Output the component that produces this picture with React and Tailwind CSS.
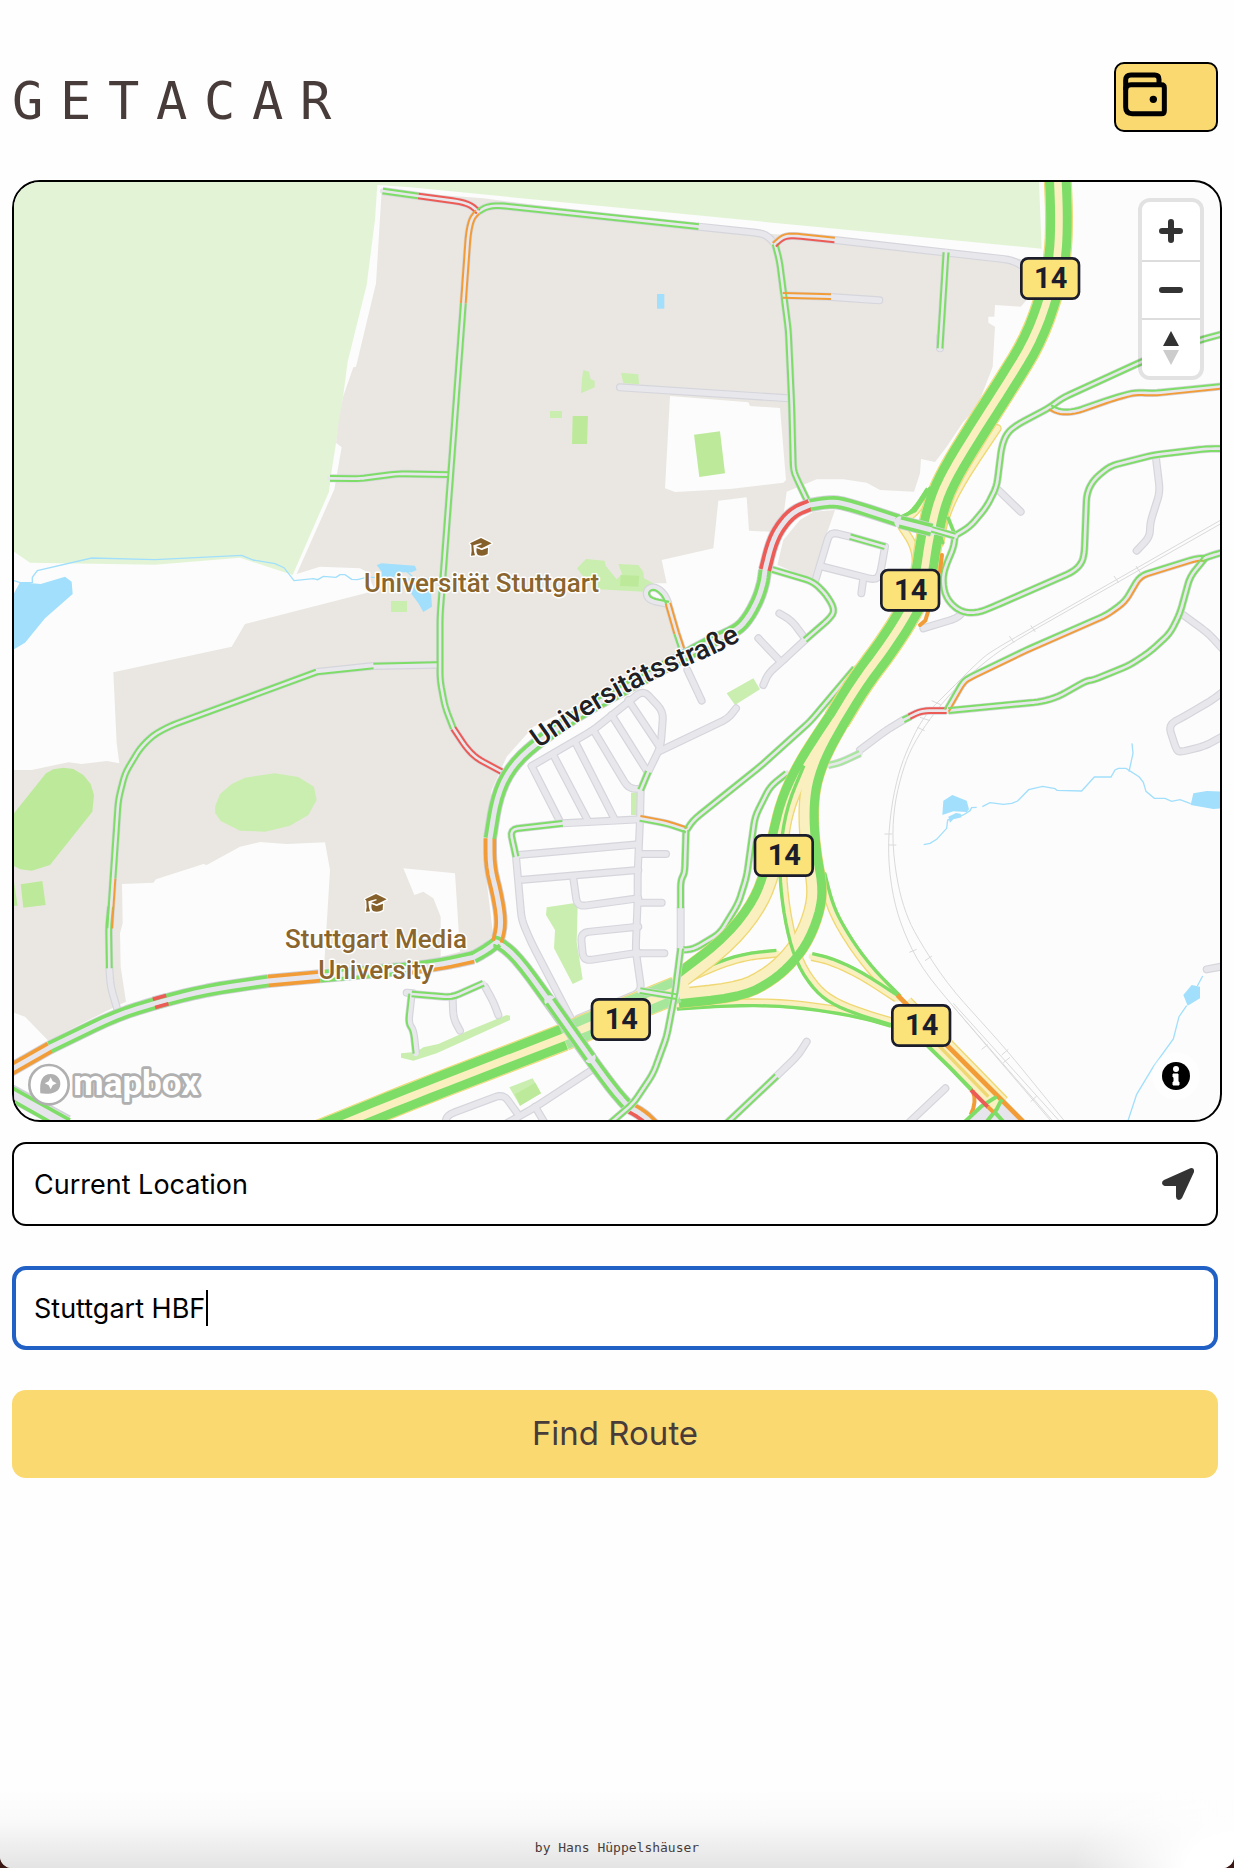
import React from "react";

/* Map geometry is written in thirds of a pixel, on six sheets with these origins. */
const A = [0, 0];
const B = [1230, 0];
const C = [2460, 0];
const D = [0, 1410];
const E = [1230, 1410];
const F = [2460, 1410];

const G = "#7ddd67";
const O = "#f29c38";
const R = "#ec5b55";
const L = "#a6e79b";

const parse = ([ox, oy], s) =>
  s.split(" ").map((p) => {
    const [x, y] = p.split(",").map(Number);
    return [x + ox, y + oy];
  });

const toPath = (pts) => "M" + pts.map((p) => p.join(",")).join("L");

/* Parallel line at distance d; positive is the right-hand side of travel. */
function offset(pts, d) {
  if (!d) return pts;
  return pts.map((p, i) => {
    const a = pts[Math.max(i - 1, 0)];
    const b = pts[Math.min(i + 1, pts.length - 1)];
    const n1 = unit(a, p);
    const n2 = unit(p, b);
    const nx = (i ? n1[0] : n2[0]) + (i < pts.length - 1 ? n2[0] : n1[0]);
    const ny = (i ? n1[1] : n2[1]) + (i < pts.length - 1 ? n2[1] : n1[1]);
    const len = Math.hypot(nx, ny) || 1;
    return [p[0] - (ny / len) * d, p[1] + (nx / len) * d];
  });
}

function unit(a, b) {
  const x = b[0] - a[0];
  const y = b[1] - a[1];
  const l = Math.hypot(x, y) || 1;
  return [x / l, y / l];
}

/* Bends are rounded by a quadratic curve that starts at most `reach` before each vertex. */
function rounded(pts, reach) {
  const out = [pts[0]];
  for (let i = 1; i < pts.length - 1; i++) {
    const [a, p, b] = [pts[i - 1], pts[i], pts[i + 1]];
    const u = unit(p, a);
    const v = unit(p, b);
    const ra = Math.min(reach, Math.hypot(a[0] - p[0], a[1] - p[1]) / 2);
    const rb = Math.min(reach, Math.hypot(b[0] - p[0], b[1] - p[1]) / 2);
    const s = [p[0] + u[0] * ra, p[1] + u[1] * ra];
    const e = [p[0] + v[0] * rb, p[1] + v[1] * rb];
    for (const t of [0.02, 0.25, 0.5, 0.75, 0.98]) {
      const q = 1 - t;
      out.push([0, 1].map((k) => q * q * s[k] + 2 * q * t * p[k] + t * t * e[k]));
    }
  }
  out.push(pts[pts.length - 1]);
  return out;
}

const KINDS = {
  minor: { casing: "#d5d5dc", fill: "#e7e7ec", outer: 24, inner: 17, off: 7, line: 6, reach: 24 },
  major: { casing: "#d0d0d8", fill: "#e5e5eb", outer: 42, inner: 34, off: 13, line: 11, reach: 80 },
  ramp: { casing: "#efd873", fill: "#f9efbf", outer: 26, inner: 18, off: 9, line: 10, reach: 120 },
  carriage: { casing: "#efd873", fill: "#f9efbf", outer: 62, inner: 54, off: 16, line: 27, reach: 120 },
  trunk: { casing: "#efd873", fill: "#f9efbf", outer: 84, inner: 78, off: 25, line: 27, reach: 120 },
};

/* [kind, sheet, points, left traffic, right traffic] */
const STREETS = [
  ["minor", B, "866,170 1055,190 1075,200 1095,222"],
  ["minor", C, "44,210 575,270 612,290"],
  ["minor", C, "33,381 178,391"],
  ["minor", C, "360,500 360,535"],
  ["minor", B, "630,652 1138,685"],
  ["minor", D, "352,1108 332,1040 328,985"],
  ["minor", E, "832,90 875,182"],
  ["minor", E, "365,378 550,270 700,150 760,215 752,320 715,395"],
  ["minor", E, "365,378 450,545"],
  ["minor", E, "430,345 535,545"],
  ["minor", E, "495,305 615,540"],
  ["minor", E, "550,270 655,445 690,447"],
  ["minor", E, "605,225 712,395"],
  ["minor", E, "655,180 745,315"],
  ["minor", E, "752,332 955,235 978,205"],
  ["minor", E, "692,450 690,540 683,700 683,780 677,930 695,1055 505,1135"],
  ["minor", E, "458,550 690,538"],
  ["minor", E, "318,650 335,840 365,910 485,1140"],
  ["minor", E, "325,645 685,613"],
  ["minor", E, "330,720 685,690"],
  ["minor", E, "490,715 502,800 685,775"],
  ["minor", E, "690,642 768,642"],
  ["minor", E, "690,788 755,788"],
  ["minor", E, "685,860 512,878 520,963 685,938"],
  ["minor", E, "685,940 763,940"],
  ["minor", E, "812,805 812,925"],
  ["minor", E, "290,1450 370,1405 545,1290"],
  ["minor", E, "105,1450 112,1425 280,1362 322,1420"],
  ["minor", E, "375,1400 405,1450"],
  ["minor", E, "1190,1205 1165,1245 1100,1308"],
  ["minor", E, "-10,1058 10,1060"],
  ["minor", E, "128,1075 130,1135 150,1172"],
  ["minor", E, "225,1040 250,1085 265,1125"],
  ["minor", B, "1185,1410 1115,1475 1075,1510 1060,1545"],
  ["minor", B, "1108,1330 1145,1352 1185,1405"],
  ["minor", B, "1045,1405 1112,1475"],
  ["minor", C, "-15,1235 30,1085 90,1100"],
  ["minor", C, "195,1130 180,1215 165,1230 0,1188"],
  ["minor", C, "130,1225 124,1270"],
  ["minor", C, "535,960 602,1025"],
  ["minor", C, "1008,865 1020,965 990,1060 990,1100 950,1142"],
  ["minor", C, "310,1375 410,1345 430,1325"],
  ["minor", C, "1090,1335 1165,1390 1215,1445"],
  ["minor", F, "1215,150 1180,178 1100,225 1045,255 1070,332 1082,336 1155,318 1215,285"],
  ["minor", F, "1160,988 1215,978"],
  ["minor", F, "376,1345 270,1445"],
  ["minor", F, "120,330 200,270 250,240"],
];

const TRAFFIC = [
  ["minor", B, "-82,63 25,78", G, G],
  ["minor", B, "25,78 150,95 182,105 205,125", R, R],
  ["minor", B, "205,125 230,110 265,106 866,170", G, G],
  ["minor", B, "203,126 185,145 175,190 160,400", O, O],
  ["minor", B, "160,400 122,915 90,1340 90,1530 105,1610 130,1675", G, G],
  ["minor", E, "130,265 170,325 200,355 290,403", R, R],
  ["minor", A, "990,925 1080,926 1195,911 1345,914", G, G],
  ["minor", B, "1095,222 1108,270 1135,480 1145,700 1150,900 1160,925 1198,1005", G, G],
  ["minor", B, "1093,224 1120,200 1150,197 1274,210", O, R],
  ["minor", B, "1118,376 1263,380", O, O],
  ["minor", C, "378,247 360,535", G, G],
  ["minor", B, "776,1302 722,1292 708,1274 714,1256 735,1250 762,1270 776,1302", null, G],
  ["minor", B, "774,1300 800,1390", O, O],
  ["minor", B, "800,1390 820,1450", O, G],
  ["minor", D, "328,985 326,860 332,800", G, G],
  ["minor", D, "329,865 339,715", G, O],
  ["minor", D, "339,715 355,480 375,400 420,325 460,285 510,258 950,96", G, G],
  ["minor", D, "950,96 1120,78", null, G],
  ["minor", D, "1120,78 1312,74", G, null],
  ["minor", E, "318,650 300,568 458,550", G, G],
  ["minor", E, "715,395 692,450", G, G],
  ["minor", E, "690,535 770,550 830,570", O, G],
  ["minor", E, "830,570 850,540 1050,380 1200,245 1335,85", G, G],
  ["minor", E, "828,570 824,700 812,720 812,805", G, G],
  ["minor", E, "812,930 850,928 930,880 985,790 1010,710 1035,530 1080,440 1130,400", G, G],
  ["minor", E, "1255,376 1290,368 1350,340", L, L],
  ["minor", F, "250,240 270,230", G, G],
  ["minor", F, "268,230 305,212 380,212", R, R],
  ["minor", E, "5,1062 125,1072 220,1030", G, G],
  ["minor", E, "5,1062 -5,1150 10,1170 18,1240", null, G],
  ["minor", E, "1100,1308 950,1450", G, G],
  ["minor", B, "1075,1195 1210,1235 1250,1275 1275,1320 1260,1345 1185,1410", G, G],
  ["minor", C, "90,1100 195,1130", G, G],
  ["minor", C, "400,1100 450,1070 500,1010 530,950 545,830 560,790 590,765 690,712 725,685 965,575 1140,510 1215,490", G, G],
  ["minor", C, "690,712 720,727 765,725 880,685 945,667 1000,670 1215,648", G, O],
  ["minor", C, "405,1100 400,1135 380,1180 368,1220 373,1270 395,1305 430,1328 475,1328 520,1310 760,1205 785,1180 793,1150 800,970 820,930 870,888 1000,855 1160,836 1215,836", G, G],
  ["minor", F, "380,212 430,125 450,112 620,30 860,-75 915,-115 960,-192 1130,-245 1155,-245", G, O],
  ["minor", C, "1145,1168 1170,1158 1215,1145", G, G],
  ["minor", C, "1155,1165 1110,1220 1080,1330 1050,1390 990,1445 930,1485 820,1530 800,1532 715,1580 665,1595 385,1622", G, G],
];

const MAJOR = [
  ["major", D, "20,1296 150,1222", O, O],
  ["major", D, "150,1222 350,1125 480,1085 620,1050 805,1023", G, G],
  ["major", D, "462,1090 502,1079", R, R],
  ["major", D, "805,1023 960,1009", O, O],
  ["major", D, "960,1009 1230,985", G, G],
  ["major", E, "0,985 100,972 190,952", G, O],
  ["major", E, "190,952 230,930 262,905", G, G],
  ["major", E, "250,905 262,905 320,950 610,1350 660,1405", G, G],
  ["major", E, "655,1400 700,1425 735,1460", O, R],
  ["major", E, "262,905 275,850 262,765 240,680 240,595", O, O],
  ["major", E, "240,595 260,470 300,385 370,315 500,225 820,50 900,5 960,-20 1000,-45 1040,-110 1060,-170 1065,-210", G, G],
  ["major", B, "1065,1200 1085,1120 1110,1070 1150,1025 1200,1005", R, R],
  ["major", B, "1200,1005 1260,995 1305,1000 1465,1052", G, G],
];

const RAMPS = [
  ["ramp", C, "240,1055 285,1030 330,960", G, null],
  ["ramp", C, "245,1070 285,1130 290,1200"],
  ["ramp", C, "532,775 415,950 372,1050 360,1120", null, null],
  ["ramp", E, "810,1028 900,985 1000,950 1100,940", G, null],
  ["ramp", E, "1205,950 1260,962 1350,1003 1460,1075", G, null],
  ["ramp", E, "800,1098 950,1088 1110,1088 1260,1106 1370,1128 1445,1150", null, G],
  ["ramp", F, "5,700 28,790 55,850 105,930 160,1000 235,1075", G, null],
  ["ramp", E, "1205,690 1205,800 1160,900"],
];

const TRUNK = [
  ["carriage", E, "1272,235 1225,305 1175,385 1130,480 1105,580 1080,700 1040,800 950,910 815,1012", null, G],
  ["carriage", E, "1288,244 1245,320 1215,390 1198,460 1195,550 1205,650 1222,740 1215,810 1180,900 1130,965 1070,1015 990,1055 805,1075", G, null],
  ["ramp", E, "1190,380 1140,500 1120,620 1118,720 1135,850 1165,960 1215,1040 1270,1085 1360,1120 1445,1145", null, G],
  ["trunk", C, "713,20 718,140 714,260 690,370 640,510 560,640 470,780 390,910 350,1000 325,1120 310,1230 270,1320 200,1430 120,1535 50,1650", G, G],
  ["trunk", E, "800,1050 690,1095 550,1153 460,1192", L, L],
  ["trunk", E, "460,1192 0,1370 -310,1496", G, G],
];

const OVER = [
  ["minor", E, "812,925 795,1060 770,1190 730,1300 670,1390 600,1450", G, G],
  ["minor", E, "690,1052 800,1070", G, G],
  ["major", E, "420,1083 540,1253", G, G],
  ["major", C, "240,1056 335,1080", G, G],
  ["minor", C, "335,1078 405,1098", G, G],
];

const LINES = [
  [C, "232,1046 285,1022 330,955", G, 11],
  [C, "385,1045 405,1095", G, 11],
  [C, "355,1085 368,1118", G, 11],
  [C, "366,1155 360,1205", O, 12],
  [C, "325,1322 316,1352 300,1365", O, 12],
];

const RAILS = [
  [C, "1215,1043 520,1440 480,1470 380,1570 310,1640 265,1730 235,1810 212,1920 203,2050 218,2180 250,2285 305,2395 400,2510 690,2850"],
  [C, "1215,1054 585,1412 500,1470 400,1560 330,1645 275,1730 245,1810 222,1910 217,2020 232,2140 257,2230 290,2300 380,2440 560,2640 735,2855"],
  [F, "400,1100 700,1445"],
  [F, "400,1090 720,1445"],
  [F, "193,582 217,582"], [F, "205,615 229,615"], [F, "268,937 290,928"], [F, "315,962 336,948"],
  [F, "485,1228 503,1214"], [F, "545,1245 565,1228"], [F, "550,1268 570,1252"], [F, "632,1385 650,1368"],
  [F, "335,182 362,194"], [F, "300,232 330,242"], [F, "292,262 314,272"],
  [C, "568,1398 582,1418"], [C, "632,1366 646,1386"], [C, "882,1218 896,1238"], [C, "948,1188 962,1210"],
];

const AREAS = [
  ["#e3f4d6", A, "42,36 3117,36 3125,236 2460,172 1230,52 1132,45 1125,150 1100,345 1043,575 1030,675 1008,820 993,915 987,965 878,1215 720,1163 465,1184 90,1178 42,1145"],
  ["#eae7e2", A, "1145,62 1128,340 1068,590 1060,592 1030,678 1018,740 1008,818 1025,832 1003,958 890,1212 960,1190 1080,1195 1100,1205 1125,1262 735,1362 695,1430 340,1507 350,1720 358,1780 320,1773 245,1782 205,1777 95,1800 42,1800 42,2528 75,2540 145,2612 345,2510 378,2495 362,2390 360,2290 368,2260 366,2142 460,2138 468,2128 610,2082 620,2085 720,2030 780,2016 860,2022 975,2017 990,2100 972,2395 1230,2385 1420,2350 1480,2300 1450,2050 1475,1860 1520,1760 1600,1670 2050,1450 2010,1300 1935,1290 1955,1240 2000,1240 1985,1170 2140,1135 2155,992 2240,982 2247,1082 2310,1085 2350,1040 2360,965 2450,928 2530,928 2600,938 2640,960 2742,965 2760,910 2763,867 2805,876 2840,830 2890,755 2930,715 2978,590 2985,470 2965,458 2965,440 2983,440 2985,405 3062,410 3080,390 3080,270 3030,262 2470,205 2290,190 1450,85"],
  ["#eae7e2", A, "2332,1185 2350,1110 2400,1050 2440,1025 2505,1020 2460,1150 2435,1230 2345,1190"],
  ["#fcfcfc", A, "1210,2095 1365,2110 1380,2345 1322,2360 1322,2240 1300,2185 1270,2165 1243,2175"],
  ["#fcfcfc", B, "780,678 1015,697 1020,708 1110,714 1128,930 1120,938 960,957 795,966 765,955"],
  ["#bdea9a", B, "852,794 930,784 945,910 868,921"],
  ["#caeeb0", B, "520,600 537,605 542,628 554,632 554,652 513,670 516,625"],
  ["#caeeb0", B, "633,608 685,613 687,643 640,640"],
  ["#caeeb0", B, "420,723 456,723 456,744 420,744"],
  ["#bdea9a", B, "488,738 534,738 531,822 486,822"],
  ["#caeeb0", B, "501,1195 528,1167 584,1172 587,1187 620,1228 636,1212 625,1182 685,1185 700,1205 702,1225 740,1245 700,1265 565,1258 520,1220"],
  ["#bdea9a", B, "632,1215 688,1217 685,1250 630,1248"],
  ["#caeeb0", A, "1173,1293 1221,1293 1221,1326 1173,1326"],
  ["#bdea9a", D, "42,520 138,400 160,388 190,383 220,387 250,405 272,432 282,465 277,515 150,675 95,692 60,688 42,678"],
  ["#bdea9a", D, "62,733 127,723 137,795 70,803"],
  ["#bdea9a", D, "42,725 53,797 42,797"],
  ["#caeeb0", D, "645,500 660,462 695,432 735,413 825,400 895,411 942,440 950,480 925,525 870,557 795,575 720,572 662,543 646,520"],
  ["#caeeb0", E, "410,802 490,790 503,800 500,905 518,1018 488,1032 432,925 435,870 408,825"],
  ["#caeeb0", E, "-27,1240 20,1235 40,1222 85,1212 180,1170 290,1125 300,1127 300,1140 180,1195 80,1240 10,1262 -27,1253"],
  ["#caeeb0", E, "298,1342 368,1315 393,1360 330,1397"],
  ["#bdea9a", E, "315,1363 376,1328 393,1360 330,1397"],
  ["#caeeb0", E, "663,458 683,458 683,525 663,525"],
  ["#caeeb0", E, "950,160 1030,115 1050,148 975,195"],
  ["#a1dffc", B, "741,372 763,372 763,416 741,416"],
  ["#a1dffc", A, "1130,1185 1145,1180 1245,1187 1250,1200 1235,1207 1190,1207 1180,1225 1145,1222 1145,1205"],
  ["#a1dffc", A, "1225,1225 1290,1225 1296,1310 1270,1326 1255,1300 1233,1270"],
  ["#a1dffc", A, "42,1270 60,1237 122,1242 195,1220 215,1235 218,1272 135,1345 75,1418 42,1438"],
  ["#a1dffc", F, "370,482 397,465 440,482 447,508 440,516 400,514 367,525"],
  ["#a1dffc", F, "385,530 408,519 422,521 425,532 400,538 390,548"],
  ["#a1dffc", F, "1120,460 1160,453 1215,455 1215,505 1180,507 1112,495"],
  ["#a1dffc", F, "1090,1065 1115,1035 1140,1040 1140,1075 1103,1097"],
];

const STREAMS = [
  [A, "42,1232 60,1238 97,1237 97,1222 112,1202 275,1164 465,1169 725,1156 760,1170 825,1181 852,1193 882,1232 940,1226 953,1229 970,1219 1008,1222 1020,1214 1035,1214 1055,1228 1072,1229 1100,1222 1140,1222"],
  [A, "1215,1200 1240,1222"],
  [F, "311,614 330,610 350,598 380,565 383,540 430,525 450,512 455,503 470,502"],
  [F, "487,500 510,488 550,493 575,490 593,483 626,449 668,439 705,446 711,451 785,453 823,411 873,411 885,390 895,385 918,385 958,411 970,427 978,454 1003,475 1035,475 1055,484 1080,479 1112,491"],
  [F, "936,310 939,340 927,395"],
  [F, "1148,1008 1132,1038"],
  [F, "1100,1097 1077,1130 1060,1197 1000,1280 950,1363 923,1445"],
];

function Roads({ list }) {
  const roads = list.map(([kind, at, s, left, right]) => ({
    k: KINDS[kind],
    pts: rounded(parse(at, s), KINDS[kind].reach),
    left,
    right,
  }));
  return (
    <g fill="none" strokeLinejoin="round">
      {roads.map((r, i) => (
        <path key={i} d={toPath(r.pts)} stroke={r.k.casing} strokeWidth={r.k.outer} strokeLinecap={r.left || r.right ? "butt" : "round"} />
      ))}
      {roads.map((r, i) => (
        <path key={i} d={toPath(r.pts)} stroke={r.k.fill} strokeWidth={r.k.inner} strokeLinecap="round" />
      ))}
      {roads.map((r, i) => (
        <React.Fragment key={i}>
          {r.left && <path d={toPath(offset(r.pts, -r.k.off))} stroke={r.left} strokeWidth={r.k.line} />}
          {r.right && <path d={toPath(offset(r.pts, r.k.off))} stroke={r.right} strokeWidth={r.k.line} />}
        </React.Fragment>
      ))}
    </g>
  );
}

function Shield({ x, y }) {
  return (
    <g>
      <rect x={x + 3} y={y + 3} width="173" height="121" rx="20" fill="#fbe279" stroke="#1b1d2a" strokeWidth="8" />
      <text x={x + 91} y={y + 92} textAnchor="middle" fontSize="87" className="fill-[#1b1d2a] font-[Roboto,sans-serif] font-bold">
        14
      </text>
    </g>
  );
}

function Cap({ x, y }) {
  return (
    <g transform={`translate(${x} ${y})`} fill="#86602b" stroke="#fff" strokeWidth="8" strokeLinejoin="round" style={{ paintOrder: "stroke" }}>
      <path d="M20 31 35 37 54 30 53 49Q38 58 24 52 17 45 20 31Z" />
      <path d="M0 17 33 1 65 17 35 32 19 26 35 20 34 16 10 23 12 42 15 53 3 54 5 40 4 21Z" />
    </g>
  );
}

const label = "fill-[#8a652e] stroke-white font-[Roboto,sans-serif] font-medium [paint-order:stroke]";

function MapCanvas() {
  return (
    <svg viewBox="42 36 3618 2814" preserveAspectRatio="xMidYMid slice" className="block h-full w-full" role="img" aria-label="Traffic map of Stuttgart">
      {AREAS.map(([fill, at, s], i) => (
        <path key={i} d={toPath(parse(at, s)) + "Z"} fill={fill} />
      ))}
      <g fill="none" stroke="#a1dffc" strokeWidth="4">
        {STREAMS.map(([at, s], i) => (
          <path key={i} d={toPath(parse(at, s))} />
        ))}
      </g>
      <g fill="none" stroke="#dadada" strokeWidth="3">
        {RAILS.map(([at, s], i) => (
          <path key={i} d={toPath(rounded(parse(at, s), 80))} />
        ))}
      </g>
      <Roads list={STREETS} />
      <Roads list={TRAFFIC} />
      <Roads list={MAJOR} />
      <Roads list={RAMPS} />
      <g transform="translate(2460 1410)" fill="none" strokeWidth="12">
        <path d="M425 1450 480 1395 535 1360 620 1450Z" fill="#e5e5eb" />
        <path d="M250 1095 340 1190 540 1395" stroke="#efd873" strokeWidth="66" />
        <path d="M250 1095 340 1190 540 1395" stroke="#f9efbf" strokeWidth="58" />
        <path d="M340 1200 505 1370" stroke="#efd873" strokeWidth="10" />
        <path d="M310 1205 390 1283 455 1350" stroke={G} />
        <path d="M232 1065 380 1215 610 1445" stroke={O} strokeWidth="14" />
        <path d="M458 1352Q472 1385 452 1425" stroke={O} />
        <path d="M435 1445 485 1398 530 1370M500 1445 530 1408 545 1378M520 1412 550 1445" stroke={G} />
        <path d="M453 1350 505 1402" stroke={R} />
        <path d="M503 1400 520 1416" stroke={O} />
      </g>
      <Roads list={TRUNK} />
      <g transform="translate(0 1410)" fill="none">
        <path d="M20 1352 200 1450" stroke="#d0d0d8" strokeWidth="52" />
        <path d="M20 1352 200 1450" stroke="#e5e5eb" strokeWidth="42" />
        <path d="M30 1340 210 1440M30 1378 150 1446" stroke={G} strokeWidth="11" />
      </g>
      <g fill="none" strokeLinecap="round">
        {LINES.map(([at, s, color, w], i) => (
          <path key={i} d={toPath(parse(at, s))} stroke={color} strokeWidth={w} />
        ))}
      </g>
      <Roads list={OVER} />

      <Shield x={3061} y={262} />
      <Shield x={2641} y={1197} />
      <Shield x={2262} y={1993} />
      <Shield x={1773} y={2485} />
      <Shield x={2674} y={2503} />

      <Cap x={1410} y={1103} />
      <Cap x={1095} y={2171} />
      <g textAnchor="middle" fontSize="78" strokeWidth="9" strokeLinejoin="round">
        <text x="1445" y="1266" className={label}>Universität Stuttgart</text>
        <text x="1128" y="2335" className={label}>Stuttgart Media</text>
        <text x="1128" y="2428" className={label}>University</text>
        <path id="street" d="M1616 1736Q1850 1570 2030 1500T2300 1360" fill="none" />
        <text fontSize="84" className="fill-[#1f2023] stroke-[#fcfcfc] font-[Roboto,sans-serif] font-medium [paint-order:stroke]" textAnchor="start">
          <textPath href="#street">Universitätsstraße</textPath>
        </text>
      </g>

      <g strokeLinejoin="round">
        <circle cx="147" cy="2744" r="59" fill="#fff" fillOpacity="0.9" stroke="#b0b0b0" strokeWidth="8" />
        <path d="M121 2770Q116 2712 152 2712C170 2712 181 2726 181 2741 181 2772 142 2774 121 2770Z" fill="#b0b0b0" />
        <path d="m152 2722 6 12 12 6-12 6-6 12-6-12-12-6 12-6Z" fill="#fff" />
        <text x="220" y="2774" fontSize="105" strokeWidth="16" className="fill-white stroke-[#b0b0b0] font-[Roboto,sans-serif] font-bold [paint-order:stroke]">
          mapbox
        </text>
      </g>
    </svg>
  );
}

function MapControls() {
  const button = "flex h-[58px] w-[58px] items-center justify-center";
  return (
    <div className="absolute top-4 right-4 flex flex-col overflow-hidden rounded-xl border-4 border-black/10 bg-white bg-clip-padding">
      <button type="button" aria-label="Zoom in" className={button}>
        <svg viewBox="0 0 24 24" className="size-6" fill="none" stroke="#333" strokeWidth="6" strokeLinecap="round">
          <path d="M12 3v18M3 12h18" />
        </svg>
      </button>
      <button type="button" aria-label="Zoom out" className={button + " border-t-2 border-[#ddd]"}>
        <svg viewBox="0 0 24 24" className="size-6" fill="none" stroke="#333" strokeWidth="6" strokeLinecap="round">
          <path d="M3 12h18" />
        </svg>
      </button>
      <button type="button" aria-label="Reset bearing to north" className={button + " border-t-2 border-[#ddd]"}>
        <svg viewBox="0 0 16 34" className="h-[34px] w-4">
          <path d="M8 0 16 15H0Z" fill="#333" />
          <path d="M8 34 16 19H0Z" fill="#ccc" />
        </svg>
      </button>
    </div>
  );
}

const field = "h-[84px] w-full rounded-[14px] bg-white pr-20 text-[27px] text-black outline-none";

export default function App() {
  return (
    <div className="flex min-h-screen flex-col bg-[#3a1712] font-[Inter,sans-serif]">
      <div className="flex flex-1 flex-col overflow-hidden rounded-b-xl bg-[#fefefe]">
        <header className="mr-4 ml-3 flex items-start justify-between pt-[62px]">
          <h1 aria-label="GETACAR" className="flex pt-1 font-['DejaVu_Sans_Mono',monospace] text-[52px] leading-[70px] text-[#483c3a]">
            {"GETACAR".split("").map((letter, i) => (
              <span key={i} className="w-12">{letter}</span>
            ))}
          </h1>
          <button type="button" aria-label="Wallet" className="flex h-[70px] w-[104px] items-start rounded-[10px] border-2 border-black bg-[#fad971] p-1.5">
            <svg viewBox="216 90 144 144" className="size-12" fill="none" stroke="#000" strokeWidth="15" strokeLinejoin="round">
              <path d="M227 150V121Q227 105 243 105H314Q327 105 327 118V134" />
              <path d="M227 150Q227 134 243 134H334Q343 134 343 143V212Q343 221 334 221H247Q227 221 227 201Z" />
              <circle cx="310" cy="178" r="11" fill="#000" stroke="none" />
            </svg>
          </button>
        </header>

        <main className="flex flex-col pt-11">
          <section className="relative mx-3 aspect-[1210/942] overflow-hidden rounded-[28px] border-2 border-black bg-[#fcfcfc]">
            <MapCanvas />
            <MapControls />
            <button type="button" aria-label="Map attribution" className="absolute right-5 bottom-5 flex size-12 items-center justify-center rounded-full bg-white/50">
              <svg viewBox="0 0 30 30" className="size-[30px]">
                <circle cx="15" cy="15" r="14" />
                <circle cx="15" cy="8" r="3" fill="#fff" />
                <path d="M12 13h5v8h1v3h-6v-3h1v-5h-1Z" fill="#fff" stroke="#fff" strokeLinejoin="round" />
              </svg>
            </button>
          </section>

          <form className="mt-5 mr-4 ml-3 flex flex-col gap-10">
            <div className="relative">
              <input aria-label="Start" defaultValue="Current Location" className={field + " border-2 border-black pl-5"} />
              <button type="button" aria-label="Use current location" className="absolute top-[26px] right-6">
                <svg viewBox="1044 114 96 96" className="size-8" fill="#333">
                  <path d="M1129 114.500Q1142 112 1140 126L1104 204Q1100 210 1094 210 1086 208 1086 200V168H1052Q1045 167 1044 160 1044 153 1050 150Z" />
                </svg>
              </button>
            </div>
            <div className="relative">
              <input aria-label="Destination" defaultValue="Stuttgart HBF" className={field + " border-4 border-[#2160c4] pl-[18px]"} />
              <span aria-hidden="true" className="absolute top-6 left-[194px] h-9 w-0.5 bg-black" />
            </div>
            <button type="submit" className="h-[88px] rounded-[14px] bg-[#fad971] text-[33px] text-[#483c3a]">
              Find Route
            </button>
          </form>
        </main>

        <footer className="mt-auto flex h-20 items-end justify-center bg-[radial-gradient(ellipse_160px_110px_at_100%_100%,#fff_30%,transparent),linear-gradient(to_bottom,#fefefe,#fafafa_40%,#e4e4e4)] pb-3 font-['DejaVu_Sans_Mono',monospace] text-[13px] leading-4 text-[#483c3a]">
          by Hans Hüppelshäuser
        </footer>
      </div>
    </div>
  );
}
